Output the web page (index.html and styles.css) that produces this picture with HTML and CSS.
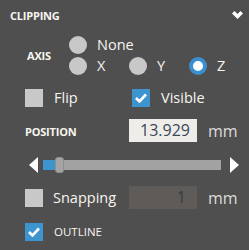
FILE: index.html
```html
<!DOCTYPE html>
<html>
<head>
<meta charset="utf-8">
<link rel="stylesheet" href="styles.css">
</head>
<body>
<div class="panel">
  <div class="header">
    <span class="title">CLIPPING</span>
    <svg class="chevron" width="11" height="8" viewBox="0 0 11 8"><path d="M0 2.5 L2.5 0 L5.5 3 L8.5 0 L11 2.5 L5.5 8 Z" fill="#fff"/></svg>
  </div>
  <div class="axis">
    <span class="label axis-label">AXIS</span>
    <div class="radios">
      <div class="radio-row">
        <label class="opt"><span class="radio"></span><span class="txt">None</span></label>
      </div>
      <div class="radio-row">
        <label class="opt"><span class="radio"></span><span class="txt">X</span></label>
        <label class="opt"><span class="radio"></span><span class="txt">Y</span></label>
        <label class="opt"><span class="radio on"></span><span class="txt">Z</span></label>
      </div>
    </div>
  </div>
  <div class="row checks">
    <label class="opt flip"><span class="box"></span><span class="txt">Flip</span></label>
    <label class="opt"><span class="box on"><svg width="12" height="10" viewBox="0 0 12 10"><path d="M1 5 L4.5 8.5 L11 1.5" fill="none" stroke="#fff" stroke-width="2.6"/></svg></span><span class="txt">Visible</span></label>
  </div>
  <div class="row position">
    <span class="label pos-label">POSITION</span>
    <span class="field">13.929</span>
    <span class="unit">mm</span>
  </div>
  <div class="slider">
    <span class="tri left"></span>
    <div class="track">
      <span class="fill"></span>
      <span class="thumb"></span>
      <span class="rest"></span>
    </div>
    <span class="tri right"></span>
  </div>
  <div class="row snapping">
    <label class="opt snap"><span class="box"></span><span class="txt">Snapping</span></label>
    <span class="field disabled">1</span>
    <span class="unit">mm</span>
  </div>
  <div class="row outline">
    <label class="opt"><span class="box on"><svg width="12" height="10" viewBox="0 0 12 10"><path d="M1 5 L4.5 8.5 L11 1.5" fill="none" stroke="#fff" stroke-width="2.6"/></svg></span><span class="txt small">OUTLINE</span></label>
  </div>
</div>
</body>
</html>
```
FILE: styles.css
```css
html, body {
  margin: 0;
  padding: 0;
  background: #4f4f4f;
}
body {
  width: 249px;
  height: 250px;
  overflow: hidden;
  font-family: "Open Sans", "Noto Sans", sans-serif;
  color: #f7f5f0;
}
.panel {
  display: flex;
  flex-direction: column;
}
.header {
  height: 30px;
  display: flex;
  align-items: center;
  justify-content: space-between;
  padding: 0 6px 0 10px;
}
.title, .label {
  font-weight: 700;
  font-size: 11px;
  letter-spacing: -0.2px;
}
.chevron {
  display: block;
}
.axis {
  display: flex;
  align-items: center;
  margin-top: 6px;
  padding-left: 27px;
}
.axis-label {
  width: 45px;
}
.radios {
  display: flex;
  flex-direction: column;
  gap: 3px;
}
.radio-row {
  display: flex;
  height: 18px;
}
.opt {
  display: flex;
  align-items: center;
  gap: 10px;
  width: 60px;
}
.radio {
  width: 18px;
  height: 18px;
  border-radius: 50%;
  background: #c8c8c8;
  box-sizing: border-box;
  flex: none;
}
.radio.on {
  background: #fff;
  border: 4px solid #3a8fd0;
}
.txt {
  font-size: 14.5px;
  line-height: 18px;
}
.txt.small {
  font-size: 11.5px;
}
.row {
  display: flex;
  align-items: center;
  padding-left: 25px;
}
.checks {
  margin-top: 14px;
  height: 18px;
}
.checks .opt {
  gap: 11px;
}
.flip {
  width: 107px;
}
.box {
  width: 18px;
  height: 18px;
  background: #c8c8c8;
  flex: none;
  display: flex;
  align-items: center;
  justify-content: center;
}
.box.on {
  background: #3d95d0;
}
.box svg {
  display: block;
}
.position {
  margin-top: 12px;
  height: 23px;
}
.pos-label {
  width: 104px;
  padding-top: 2px;
}
.field {
  width: 68px;
  height: 23px;
  box-sizing: border-box;
  background: #efedea;
  color: #3a4758;
  font-size: 16px;
  line-height: 23px;
  text-align: right;
  padding-right: 7px;
}
.field.disabled {
  background: #5e5b59;
  color: #3c3c3c;
  padding-right: 11px;
}
.unit {
  margin-left: 11px;
  font-size: 16px;
  color: #dcdcdc;
}
.slider {
  display: flex;
  align-items: center;
  height: 16px;
  margin-top: 15px;
  padding-left: 29px;
}
.tri {
  width: 0;
  height: 0;
  border-top: 8px solid transparent;
  border-bottom: 8px solid transparent;
}
.tri.left {
  border-right: 9px solid #fff;
  margin-right: 5px;
}
.tri.right {
  border-left: 9px solid #fff;
  margin-left: 9px;
}
.track {
  display: flex;
  align-items: center;
  width: 178px;
  height: 16px;
}
.fill {
  width: 12px;
  height: 10px;
  background: #3d95d0;
}
.thumb {
  width: 9px;
  height: 16px;
  box-sizing: border-box;
  border-radius: 3px;
  background: #a4a4a4;
  border: 1px solid #8e8e8e;
}
.rest {
  flex: 1;
  height: 10px;
  background: #a2a2a2;
}
.snapping {
  margin-top: 13px;
  height: 23px;
}
.snap {
  width: 104px;
}
.outline {
  margin-top: 14px;
  height: 18px;
}
.outline .opt {
  gap: 11px;
  width: auto;
}
.snapping .opt {
  gap: 10px;
}
```
